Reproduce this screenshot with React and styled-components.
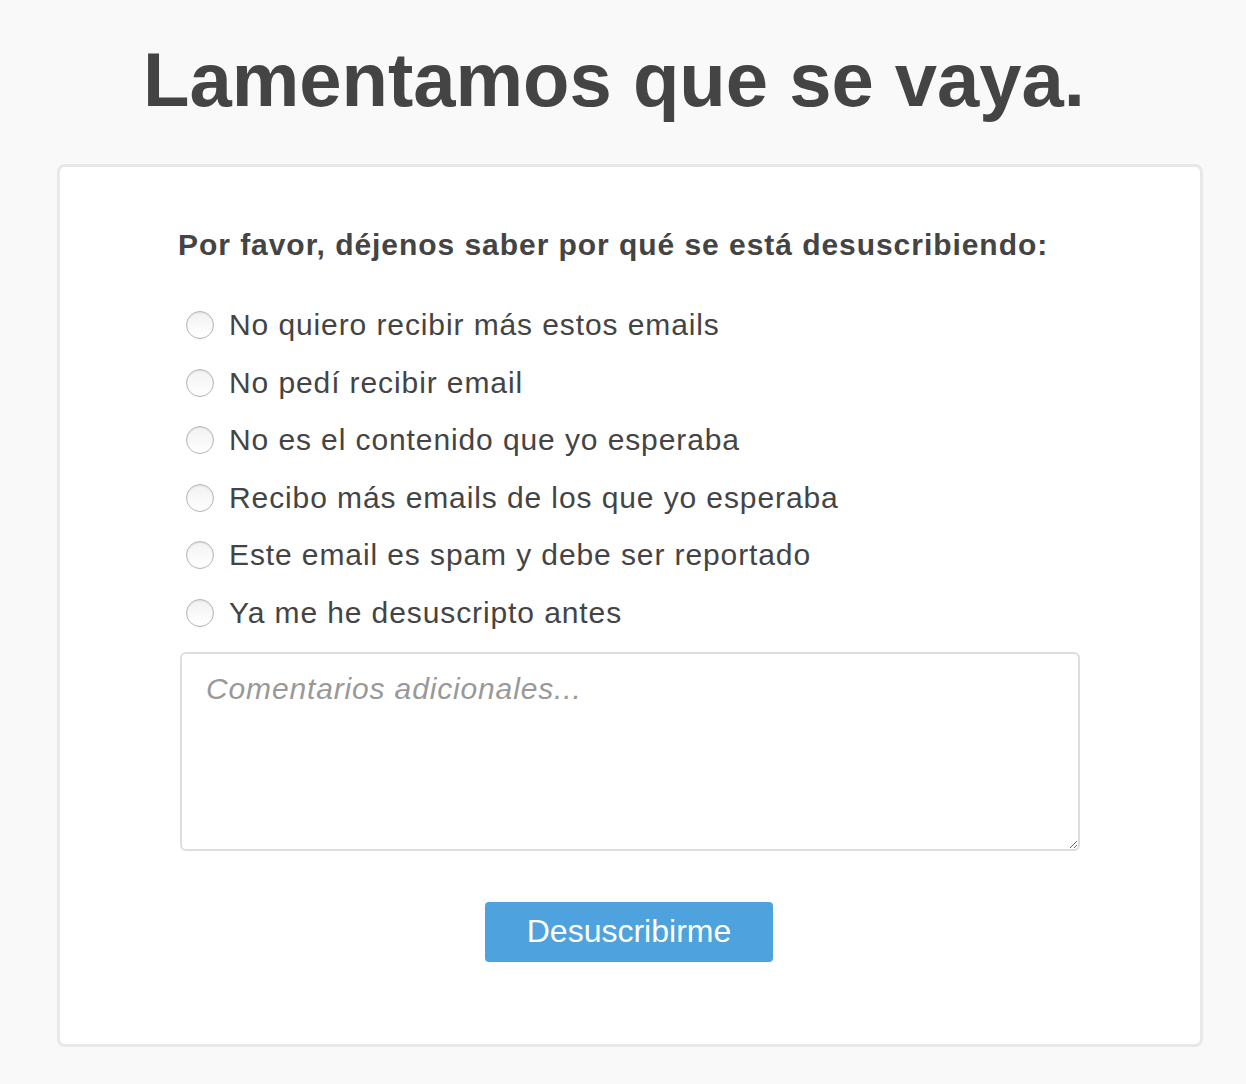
import React from "react";
import styled, { createGlobalStyle } from "styled-components";

const Global = createGlobalStyle`
  html, body { margin: 0; padding: 0; background: #f9f9f9; }
  body { font-family: "Liberation Sans", Arial, sans-serif; color: #444; }
`;

const Page = styled.div`
  padding: 0 43px 38px 57px;
`;

const Title = styled.h1`
  margin: 0;
  padding: 34px 32px 38px 0;
  text-align: center;
  font-size: 76px;
  line-height: 92px;
  font-weight: 700;
  color: #444;
`;

const Card = styled.form`
  background: #fff;
  border: 3px solid #e8e8e8;
  border-radius: 8px;
  padding: 58px 120px 82px 118px;
  display: flex;
  flex-direction: column;
`;

const Question = styled.h2`
  margin: 0 0 42px 0;
  font-size: 30px;
  letter-spacing: 0.95px;
  line-height: 40px;
  font-weight: 700;
  color: #444;
`;

const Options = styled.div`
  display: flex;
  flex-direction: column;
  gap: 21.5px;
  padding-left: 8px;
`;

const Option = styled.label`
  display: flex;
  align-items: center;
  gap: 15px;
  font-size: 30px;
  letter-spacing: 0.9px;
  line-height: 36px;
  color: #444;
  cursor: pointer;
`;

const Radio = styled.input.attrs({ type: "radio" })`
  appearance: none;
  margin: 0;
  width: 28px;
  height: 28px;
  border-radius: 50%;
  border: 1px solid #b5b5b5;
  background: linear-gradient(#f2f2f2, #ffffff);
  box-shadow: inset 0 1px 2px rgba(0,0,0,0.08);
  flex: none;
  &:checked {
    background: radial-gradient(circle, #555 0 6px, #fff 7px);
  }
`;

const Comments = styled.textarea`
  margin: 21px 0 0 2px;
  box-sizing: border-box;
  width: 900px;
  height: 199px;
  border: 2px solid #ddd;
  border-radius: 6px;
  padding: 18px 24px;
  font-family: "Liberation Sans", Arial, sans-serif;
  font-size: 30px;
  letter-spacing: 0.85px;
  color: #444;
  resize: both;
  &::placeholder { color: #999; font-style: italic; }
`;

const Actions = styled.div`
  display: flex;
  justify-content: center;
  padding-top: 51px;
`;

const Button = styled.button`
  width: 288px;
  height: 60px;
  border: none;
  border-radius: 4px;
  background: #4ea2dd;
  color: #fff;
  font-family: "Liberation Sans", Arial, sans-serif;
  font-size: 32px;
  cursor: pointer;
`;

const reasons = [
  "No quiero recibir más estos emails",
  "No pedí recibir email",
  "No es el contenido que yo esperaba",
  "Recibo más emails de los que yo esperaba",
  "Este email es spam y debe ser reportado",
  "Ya me he desuscripto antes",
];

export default function App() {
  return (
    <Page>
      <Global />
      <Title>Lamentamos que se vaya.</Title>
      <Card onSubmit={(e) => e.preventDefault()}>
        <Question>Por favor, déjenos saber por qué se está desuscribiendo:</Question>
        <Options>
          {reasons.map((r) => (
            <Option key={r}>
              <Radio name="reason" value={r} />
              {r}
            </Option>
          ))}
        </Options>
        <Comments placeholder="Comentarios adicionales..." />
        <Actions>
          <Button type="submit">Desuscribirme</Button>
        </Actions>
      </Card>
    </Page>
  );
}
